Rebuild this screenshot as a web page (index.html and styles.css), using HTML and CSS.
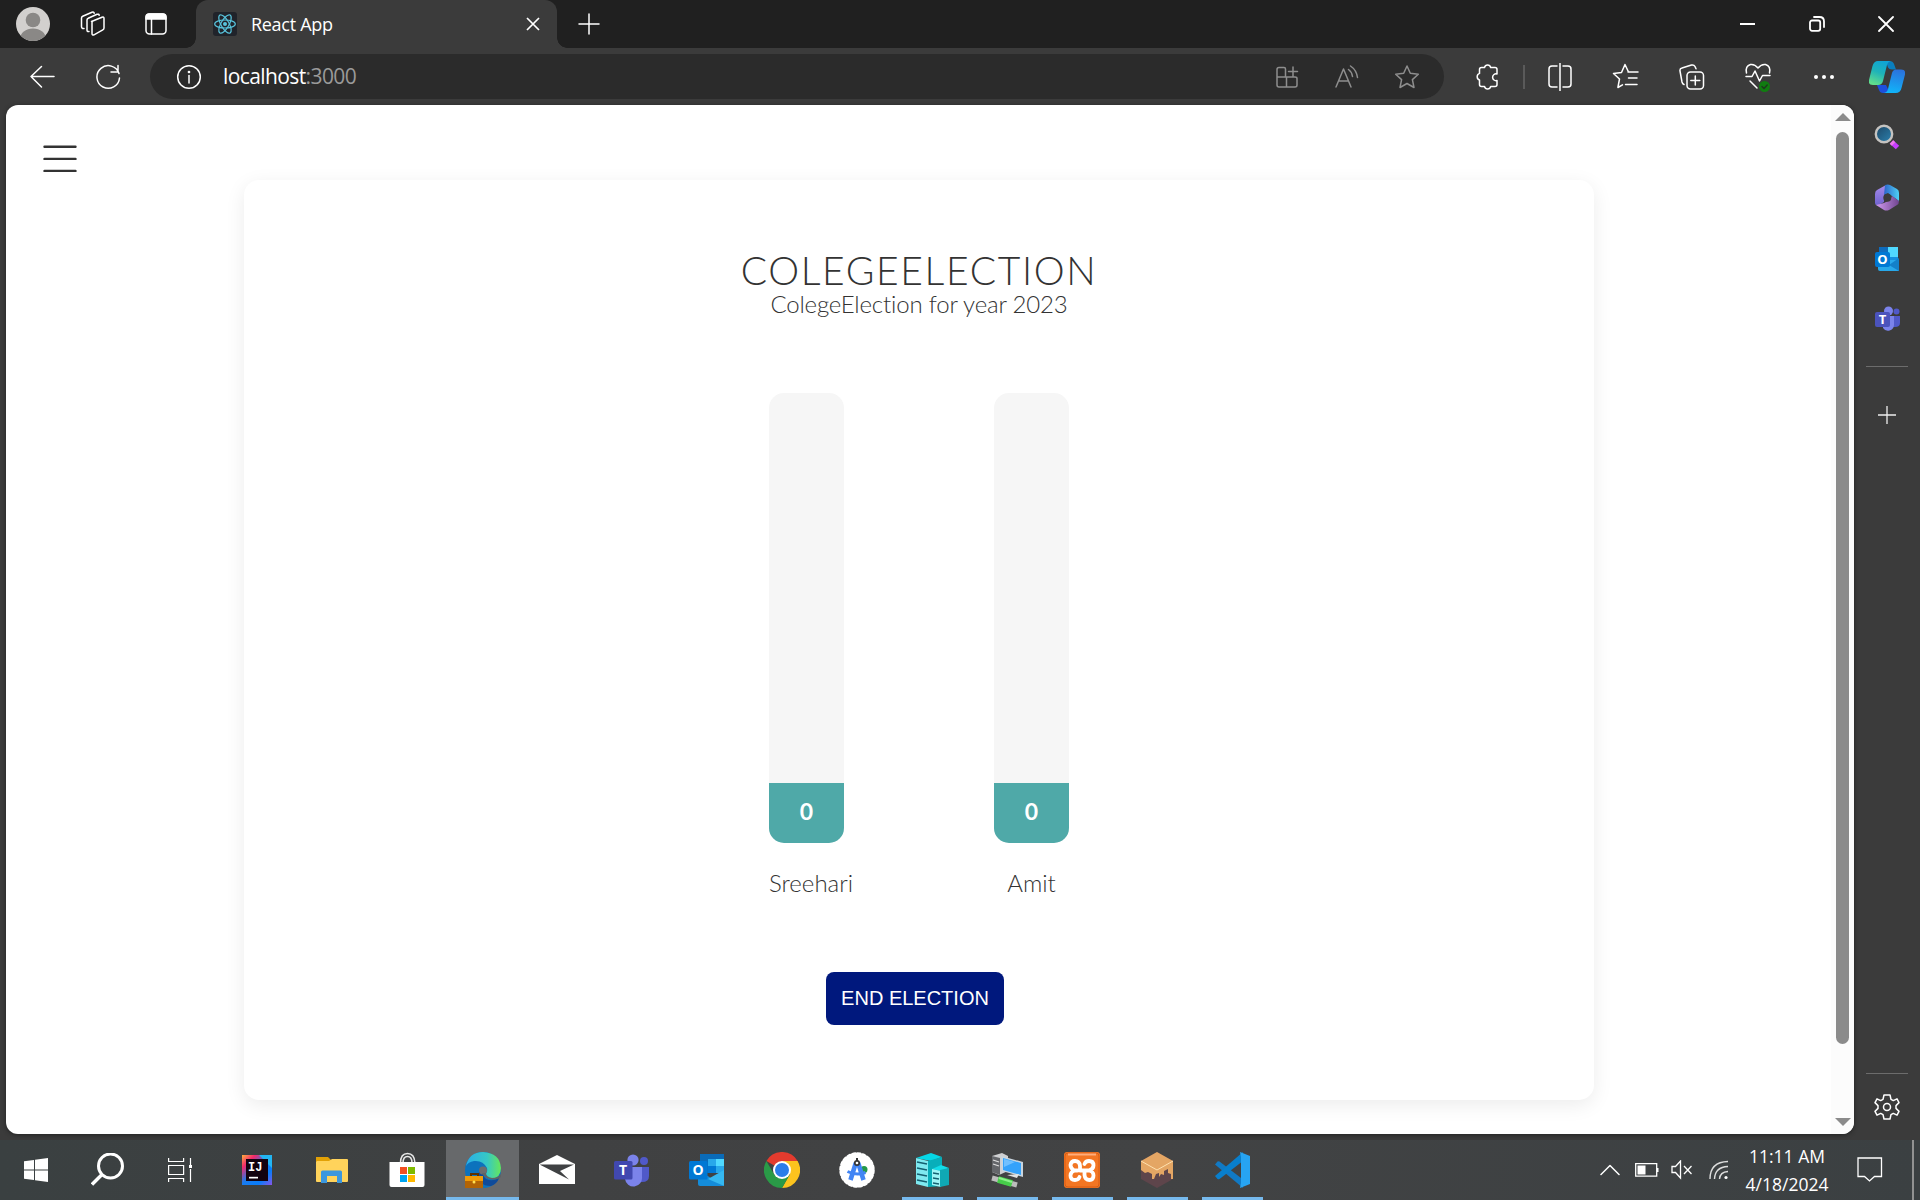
FILE: index.html
```html
<!DOCTYPE html>
<html lang="en">
<head>
<meta charset="utf-8">
<title>React App</title>
<link rel="stylesheet" href="styles.css">
</head>
<body>
<div class="screen">
  <header class="tabstrip">
    <div class="cell w66"><svg width="34" height="34" viewBox="0 0 34 34"><defs><clipPath id="av"><circle cx="17" cy="17" r="17"/></clipPath></defs><circle cx="17" cy="17" r="17" fill="#d2d0ce"/><g clip-path="url(#av)" fill="#8a8886"><circle cx="17" cy="13" r="7.3"/><ellipse cx="17" cy="32" rx="13" ry="10.5"/></g></svg></div>
    <div class="cell w54"><svg width="26" height="26" viewBox="0 0 26 26" class="line"><path d="M11.5 10.5 22 6.2q2-.7 2 1.300v9.500q0 1.300-1.200 1.900L14 23.800q-2 .8-2-1.200V11.500q0-.8.600-1.100z"/><path d="M9 20.500q-2 .5-2-1.500V9q0-1.200 1.200-1.700L17 3.300q2-.6 2.200 1"/><path d="M4 17.500q-2.500.3-2.500-2V7q0-1.200 1.200-1.700L12 1.200q1.800-.6 2.200 1"/></svg></div>
    <div class="cell w72"><svg width="24" height="24" viewBox="0 0 24 24" class="line"><rect x="2" y="2" width="20" height="20" rx="3.500"/><path d="M7.500 7v15"/><path d="M2 7V5q0-3 3-3h14q3 0 3 3v2z" fill="#fff"/></svg></div>
    <div class="tab">
      <svg class="favicon" width="24" height="24" viewBox="0 0 24 24"><rect width="24" height="24" rx="3" fill="#20232a"/><g fill="none" stroke="#58c4dc" stroke-width="1.200"><ellipse cx="12" cy="12" rx="10.300" ry="4"/><ellipse cx="12" cy="12" rx="10.300" ry="4" transform="rotate(60 12 12)"/><ellipse cx="12" cy="12" rx="10.300" ry="4" transform="rotate(120 12 12)"/></g><circle cx="12" cy="12" r="2" fill="#58c4dc"/></svg>
      <span class="tab-title">React App</span>
      <svg class="tab-close" width="14" height="14" viewBox="0 0 14 14"><path d="M1 1 13 13M13 1 1 13"/></svg>
    </div>
    <div class="cell w64"><svg width="22" height="22" viewBox="0 0 22 22" class="line"><path d="M11 1v20M1 11h20"/></svg></div>
    <div class="window-buttons">
      <div class="cell w69"><svg width="16" height="16" viewBox="0 0 16 16"><path d="M0 7h15v2H0z" fill="#fff"/></svg></div>
      <div class="cell w69"><svg width="16" height="16" viewBox="0 0 16 16" class="line bold"><rect x="1" y="4.500" width="10.200" height="10.300" rx="2"/><path d="M5 1h5.500q4.500 0 4.500 4.500V11"/></svg></div>
      <div class="cell w69"><svg width="16" height="16" viewBox="0 0 16 16" class="line bold"><path d="M1 1 15 15M15 1 1 15"/></svg></div>
    </div>
  </header>

  <nav class="toolbar">
    <div class="cell w66"><svg width="26" height="24" viewBox="0 0 26 24" class="line"><path d="M25 11.500H2M12.500 1.500 2 11.500l10.500 10.500"/></svg></div>
    <div class="cell w66"><svg width="26" height="26" viewBox="0 0 26 26" class="line"><path d="M24 9.500A11.300 11.300 0 1 0 24.500 14M23 1.500V8h-7"/></svg></div>
    <div class="address">
      <div class="cell w66"><svg width="26" height="26" viewBox="0 0 26 26" class="line"><circle cx="13" cy="13" r="11.300"/><path d="M13 11.500v7.500"/><circle cx="13" cy="8" r=".6" fill="#fff"/></svg></div>
      <span class="url">localhost<span class="port">:3000</span></span>
      <div class="address-icons">
        <div class="cell w60"><svg width="24" height="24" viewBox="0 0 24 24" class="line dim"><path d="M10.500 12V4q0-1.500-1.500-1.500H4Q2 2.500 2 4.500V20q0 2 2 2h16q2 0 2-2v-6.500q0-1.500-2-1.500H2M11.500 12v10M18 2v9M13.500 6.500h9"/></svg></div>
        <div class="cell w60"><svg width="26" height="24" viewBox="0 0 26 24" class="line dim"><path d="M2 22 9.500 4 17 22M4.500 16h10M14.500 4.500q3.500 2.500 4 7M16.500 1q6 4 7 11.500"/></svg></div>
        <div class="cell w60"><svg width="26" height="26" viewBox="0 0 26 26" class="line dim"><path d="m13 2 3.300 7.300 8 .9-5.900 5.400 1.600 7.900-7-4-7 4 1.600-7.900-5.900-5.400 8-.9z"/></svg></div>
      </div>
    </div>
    <div class="cell w66 ext"><svg width="26" height="28" viewBox="0 0 26 28" class="line"><path d="M9.500 4.500a3.200 3.200 0 0 1 6.200 0H20q2 0 2 2V11a3.400 3.400 0 1 0 0 6.500v4q0 2-2 2h-4.300a3.200 3.200 0 0 1-6.200 0H6.500q-2 0-2-2V17a3.500 3.500 0 0 1 0-6.600V6.500q0-2 2-2z"/></svg></div>
    <div class="tool-divider"></div>
    <div class="cell w66"><svg width="26" height="28" viewBox="0 0 26 28" class="line"><path d="M10 3H5Q2 3 2 6v15q0 3 3 3h5M16 3h5q3 0 3 3v15q0 3-3 3h-5M13 0v28"/></svg></div>
    <div class="cell w66"><svg width="28" height="28" viewBox="0 0 28 28" class="line"><path d="M16.500 9 13 1.500 9.500 9.500l-8 1 6 5.500-1.600 8.500 4.600-2.700M16 9h10M16.500 15h8.500M13.500 21.500H25"/></svg></div>
    <div class="cell w66"><svg width="26" height="28" viewBox="0 0 26 28" class="line"><rect x="8" y="9" width="16.500" height="17" rx="3.500"/><path d="M16.300 13v9M11.800 17.500h9M5 21.500Q3.500 21 3 19L1 8q-.4-2.500 2-3L12.500 2q2.500-.5 3.500 1.500l1 2.300"/></svg></div>
    <div class="cell w66"><svg width="28" height="30" viewBox="0 0 28 30" class="line"><path d="M2.500 11Q1 4 6.500 2.500q4-.7 7.500 3.500 3.500-4.200 7.500-3.500Q27 4 25.500 11M2 14.500h6L11 9l4.500 10 3-5.500H26M6 19l7 7"/><circle cx="20.500" cy="24.500" r="5.500" fill="#107c10" stroke="none"/><path d="m18 24.500 2 2 3.200-3.500" stroke="#1d3b1d"/></svg></div>
    <div class="cell w66"><svg width="22" height="6" viewBox="0 0 22 6" fill="#fff"><circle cx="3" cy="3" r="2"/><circle cx="11" cy="3" r="2"/><circle cx="19" cy="3" r="2"/></svg></div>
    <div class="cell copilot"><svg width="36" height="32" viewBox="0 0 36 32"><defs><linearGradient id="c1" x1=".7" y1="0" x2=".3" y2="1"><stop offset="0" stop-color="#0ea3d6"/><stop offset=".5" stop-color="#1fb3b8"/><stop offset="1" stop-color="#62de8c"/></linearGradient><linearGradient id="c2" x1=".6" y1="0" x2=".4" y2="1"><stop offset="0" stop-color="#2b72dc"/><stop offset="1" stop-color="#10b5fa"/></linearGradient></defs><path d="M8 24h9l4 8h-7q-3 0-4-3z" fill="#1d4fdc"/><path d="M13 0h7q4 0 5 3l2 5.500h-4q-3 0-4-2-1-5-6-6.500z" fill="#0a7fbe"/><path d="M9 0h14q-4 0-5 4l-4 16q-1 4-5 4H4q-5 0-4-5L3.500 5Q5 0 9 0z" fill="url(#c1)"/><path d="M27 8.500h5q5 0 4 5L32.500 27q-1 5-6 5H14q4 0 5-4l4-16q1-3.500 4-3.500z" fill="url(#c2)"/></svg></div>
  </nav>

  <div class="content">
    <main class="page">
      <div class="viewport">
        <svg class="hamburger" width="36" height="30" viewBox="0 0 36 30"><path d="M2.500 2.700h31M2.500 14.900h31M2.500 26.900h31" stroke="#333" stroke-width="2.400" stroke-linecap="round"/></svg>
        <section class="card">
          <h1 class="title">COLEGEELECTION</h1>
          <p class="subtitle">ColegeElection for year 2023</p>
          <div class="bars">
            <div class="candidate"><div class="track"><div class="fill">0</div></div><span class="name n-sreehari">Sreehari</span></div>
            <div class="candidate"><div class="track"><div class="fill">0</div></div><span class="name">Amit</span></div>
          </div>
          <button class="end">END ELECTION</button>
        </section>
      </div>
      <div class="scrollbar">
        <svg width="16" height="8" viewBox="0 0 16 8"><path d="M0 8 8 0l8 8z" fill="#8b8b8b"/></svg>
        <div class="thumb"></div>
        <svg class="down" width="16" height="8" viewBox="0 0 16 8"><path d="M0 0h16L8 8z" fill="#8b8b8b"/></svg>
      </div>
    </main>
    <aside class="sidebar">
      <svg class="s-search" width="26" height="26" viewBox="0 0 26 26"><defs><linearGradient id="sg" x1="0" y1="0" x2="1" y2="1"><stop offset="0" stop-color="#1d4665"/><stop offset="1" stop-color="#2b82b0"/></linearGradient></defs><path d="m17.500 18 6 5.500" stroke="#c63cff" stroke-width="5"/><path d="m17.500 18 2 2" stroke="#ee79ea" stroke-width="5"/><circle cx="10" cy="10" r="8.200" fill="url(#sg)" stroke="#c5c3c0" stroke-width="2.400"/></svg>
      <svg class="s-app" width="26" height="28" viewBox="0 0 26 28"><defs><linearGradient id="m1" x1="0" y1="0" x2="0" y2="1"><stop offset="0" stop-color="#a78bea"/><stop offset="1" stop-color="#6f63cf"/></linearGradient><linearGradient id="m2"><stop offset="0" stop-color="#2c64c9"/><stop offset="1" stop-color="#4ed0f5"/></linearGradient><linearGradient id="m3"><stop offset="0" stop-color="#d09af0"/><stop offset="1" stop-color="#70458f"/></linearGradient></defs><path d="M12 1 3 6Q1 7 1 10v9q0 3 4 2l5-3v-7l2-2z" fill="url(#m1)"/><path d="M11 1q3-1 5 0l7 4q2 1 2 4v8l-7-5-4-3-4 2z" fill="url(#m2)"/><path d="m2 21 8-2 6-3 2-4 7 5q0 3-2 4l-8 5q-3 1-5 0z" fill="url(#m3)"/><circle cx="13.300" cy="13.800" r="4" fill="#3b3b3b"/></svg>
      <svg class="s-app" width="26" height="26" viewBox="0 0 26 26"><path d="M5 1h19v20H5z" fill="#1490df"/><path d="M14 1h10v10H14z" fill="#50d9ff"/><path d="M5 1h9v6H5z" fill="#0f6cbd"/><path d="M4 14h20l1 11H6q-2 0-2-2z" fill="#28a8ea"/><path d="m25 12-10 7 10 6z" fill="#1380c8"/><rect x="1" y="6" width="15" height="15" rx="2" fill="#0078d4"/><text x="8.500" y="18" class="badge-letter">O</text></svg>
      <svg class="s-app" width="26" height="26" viewBox="0 0 26 26"><circle cx="14.500" cy="5" r="4.500" fill="#7b83eb"/><circle cx="22.500" cy="5.500" r="3" fill="#5059c9"/><path d="M18 10h8v7q0 4-5 4h-3z" fill="#5059c9"/><path d="M9 10h11v9a6 6 0 0 1-11 3z" fill="#7b83eb"/><rect x="1" y="6" width="15" height="15" rx="2" fill="#4b53bc"/><text x="8.500" y="18" class="badge-letter">T</text></svg>
      <div class="side-divider"></div>
      <svg class="s-plus" width="18" height="18" viewBox="0 0 18 18"><path d="M9 0v18M0 9h18" stroke="#eee" stroke-width="1.300"/></svg>
      <div class="side-divider bottom"></div>
      <svg class="s-gear" width="26" height="28" viewBox="0 0 26 28"><g fill="none" stroke="#fff" stroke-width="1.500" stroke-linejoin="round"><path d="M10 2h6l1 4.300 2.300 1.300 3.700-1.800 2 3.800-3 3v2.800l3 3-2 3.800-3.700-1.800L17 21.700 16 26h-6l-1-4.300-2.300-1.300L3 22.200l-2-3.800 3-3v-2.800l-3-3 2-3.800 3.700 1.800L9 6.300z"/><circle cx="13" cy="14" r="3.500"/></g></svg>
    </aside>
  </div>

  <footer class="taskbar">
    <div class="cell w72"><svg width="24" height="24" viewBox="0 0 24 24" fill="#fff"><path d="M0 3.300 10 2v9.500H0zM11 1.800 24 0v11.500H11zM0 12.500h10V22L0 20.700zM11 12.500h13V24l-13-1.800z"/></svg></div>
    <div class="cell w72"><svg width="34" height="34" viewBox="0 0 34 34" fill="none" stroke="#fff"><circle cx="19.500" cy="13" r="12" stroke-width="3"/><path d="M11 21.500 1 31.500" stroke-width="3.400"/></svg></div>
    <div class="cell w72"><svg width="24" height="24" viewBox="0 0 24 24" fill="none" stroke="#fff" stroke-width="1.200"><path d="M.6 0v3.500h15V0M.6 7.500h15v9H.6zM.6 24v-3.500h15V24M22.500 0v7M22.500 11v13"/><path d="M21 7h3v3h-3z" fill="#fff" stroke="none"/></svg></div>
    <div class="cell tile first"><svg width="30" height="30" viewBox="0 0 30 30"><defs><linearGradient id="ij" x1="0" y1="0" x2="1" y2="1"><stop offset="0" stop-color="#fdb13c"/><stop offset=".22" stop-color="#f4286c"/><stop offset=".48" stop-color="#197cf0"/><stop offset=".75" stop-color="#087cfa"/><stop offset="1" stop-color="#8a55e8"/></linearGradient></defs><path d="M0 0h30v30H0z" fill="url(#ij)"/><path d="M17 0h13v13z" fill="#22b5f2"/><path d="M4 4h22v22H4z" fill="#12020f"/><path d="M7 21.800h9v1.700H7z" fill="#fff"/><text x="6" y="15.500" class="ij">IJ</text></svg></div>
    <div class="cell tile"><svg width="32" height="28" viewBox="0 0 32 28"><path d="M0 1h12l3 3v4H0z" fill="#e2a106"/><path d="M1 5h12l3-2h15q1 0 1 1v21q0 1-1 1H1q-1 0-1-1V6z" fill="#ffd35b"/><path d="M5 27V16q0-1.500 1.500-1.500h18Q26 14.500 26 16v11h-5v-7H11v7z" fill="#3b97de"/></svg></div>
    <div class="cell tile"><svg width="36" height="36" viewBox="0 0 36 36"><g fill="none" stroke="#e8e8e8" stroke-width="1.500"><path d="M11.500 11q0-9.500 7-9.500t7.500 9.500M14 11q0-6.500 4.500-6.500T23 11"/></g><path d="M.5 10h35v23q0 2-2 2h-31q-2 0-2-2z" fill="#fff"/><path d="M11 15h7v7h-7z" fill="#f25022"/><path d="M19 15h7v7h-7z" fill="#7fba00"/><path d="M11 23h7v7h-7z" fill="#00a4ef"/><path d="M19 23h7v7h-7z" fill="#ffb900"/></svg></div>
    <div class="cell tile active"><svg width="36" height="36" viewBox="0 0 36 36"><defs><linearGradient id="e1"><stop offset="0" stop-color="#2aaee8"/><stop offset=".6" stop-color="#36c8c5"/><stop offset="1" stop-color="#66e65a"/></linearGradient></defs><circle cx="18" cy="18" r="18" fill="#0c72bd"/><path d="M1 14Q4 0 18 0q17 1 18 16 0 10-10 11-6-1-6-5 3-2 2-6-4-8-13-7-6 1-8 5z" fill="url(#e1)"/><path d="M14 20q-2 14 12 14 6-2 8-8-7 4-13 1-4-3-3-9z" fill="#0f4b9a"/><circle cx="18" cy="18.500" r="4" fill="#6b6c6e"/><path d="M17 21q3 6 11 6.500 4 .5 8-2.500v-3q-3 4-9 4-6-1-6-5z" fill="#606264"/><path d="M6 24v-2h7v2" fill="none" stroke="#5b3000" stroke-width="2"/><path d="M0 24h18v12H0z" fill="#b26406"/><path d="M0 24h18v5H0z" fill="#ef9b08"/><circle cx="9" cy="30" r="1.500" fill="#ffe052"/></svg></div>
    <div class="cell tile"><svg width="36" height="30" viewBox="0 0 36 30"><path d="M0 9 18 0l18 9v20H0z" fill="#fff"/><path d="M1 9.500h34L21 16l9 8.500L1.500 10z" fill="#3f4143"/></svg></div>
    <div class="cell tile"><svg width="36" height="34" viewBox="0 0 36 34"><circle cx="19" cy="7" r="5.600" fill="#7b83eb"/><circle cx="30" cy="8" r="4" fill="#5059c9"/><path d="M25 14h10v9q0 6-7 6h-5z" fill="#5059c9"/><path d="M12 14h16v10a8.500 8.500 0 0 1-17 2z" fill="#7b83eb"/><rect x="0" y="8" width="18.500" height="18.500" rx="1.500" fill="#4148b0"/><text x="9" y="22" class="task-letter">T</text></svg></div>
    <div class="cell tile"><svg width="36" height="34" viewBox="0 0 36 34"><path d="M11 1h24v19H11z" fill="#0a6bb8"/><path d="M19 6h8v7h-8z" fill="#28a8ea"/><path d="M27 6h8v7h-8z" fill="#50d9ff"/><path d="M19 13h8v7h-8z" fill="#0078d4"/><path d="M27 13h8v7h-8z" fill="#28a8ea"/><path d="M9 17 35 33H11q-2 0-2-2z" fill="#148cda"/><path d="m35 17-16 9 16 7z" fill="#35b8f1"/><rect x="0" y="8" width="18.500" height="18.500" rx="1.500" fill="#0078d4"/><text x="9" y="22" class="task-letter">O</text></svg></div>
    <div class="cell tile"><svg width="36" height="36" viewBox="0 0 36 36"><path d="M18 18 2.400 9A18 18 0 0 1 33.600 9z" fill="#e33b2e"/><path d="M18 9h15.600A18 18 0 0 1 18 36l8-14z" fill="#fcc31e"/><path d="M2.400 9 10.200 22.500 18 27l7.800-4.500L18 36A18 18 0 0 1 2.400 9z" fill="#2a9a47"/><circle cx="18" cy="18" r="9" fill="#fff"/><circle cx="18" cy="18" r="7" fill="#2b7de9"/></svg></div>
    <div class="cell tile"><svg width="36" height="36" viewBox="0 0 36 36"><circle cx="18" cy="18" r="16.500" fill="#fff"/><circle cx="18" cy="18" r="16.500" fill="none" stroke="#fff" stroke-width="2.500" stroke-linecap="round" stroke-dasharray="3 2.180"/><circle cx="25" cy="17.500" r="3.500" fill="#249848"/><path d="M16.800 11 11.500 28M19.200 11l5.300 17" stroke="#4285f4" stroke-width="4.600"/><path d="M8.500 19.500q9 4.500 18 1" stroke="#4285f4" stroke-width="3" fill="none"/><circle cx="18" cy="11" r="2.200" fill="#fff" stroke="#333" stroke-width="1.700"/><path d="M18 6v3" stroke="#333" stroke-width="2"/></svg></div>
    <div class="cell tile open"><svg width="34" height="36" viewBox="0 0 34 36"><path d="m1 6 15-5 11 4-11 4z" fill="#06d6e6"/><path d="m1 6 12 3v26L1 32z" fill="#7ee9f0"/><path d="m13 9 14-4v29l-14 1z" fill="#08aeba"/><path d="m2 10 10 2m-10 4 10 2M2 22l10 2M2 28l10 2" stroke="#155f70" stroke-width="1.500"/><path d="m17 17 9-4 8 3-7 3z" fill="#12dce8"/><path d="m17 17 9 2v16l-9-2z" fill="#9df4f6"/><path d="m25 18 9-2v17l-9 2z" fill="#0fa8b4"/><path d="m18 21 6 1m-6 4 6 1m-6 4 6 1" stroke="#155f70" stroke-width="1.300"/></svg></div>
    <div class="cell tile open"><svg width="34" height="36" viewBox="0 0 34 36"><path d="m2 4 10-3 6 3v15l-9 4-7-3z" fill="#cecfd1"/><path d="m2 4 8 2v17l-8-3z" fill="#64666a"/><path d="m3 8 6 2m-6 2 6 2" stroke="#ddd" stroke-width="1.300"/><path d="m11 4 22 6v15l-21-6z" fill="#c9d5de"/><path d="m13 6 18 5v12l-18-5z" fill="#34a2fb"/><path d="m14 7 11 3-11 5z" fill="#70c0ff"/><path d="m17 23 12-1-2 4z" fill="#e3e3e3"/><path d="m2 26 25 7" stroke="#bcbcbc" stroke-width="5"/><path d="m8 27.500 14 4" stroke="#46cc49" stroke-width="7"/><path d="m9 26 13 4" stroke="#8cf18b" stroke-width="2"/></svg></div>
    <div class="cell tile open"><svg width="36" height="36" viewBox="0 0 36 36"><rect width="36" height="36" rx="3" fill="#f37623"/><rect x="1" y="1" width="34" height="34" rx="3" fill="none" stroke="#d95d14" stroke-width="1"/><path d="M4 1.500h28v2H4z" fill="#ffad7b"/><path d="M13.500 18.500H10Q6.500 16 6.500 13q.5-4 4.500-4 4.500 0 5 5v4.500h9M20.500 12q1-3 4.500-3 4.500 0 4.500 4.500 0 3.500-4.500 5 4.500 1 4.500 5 0 4.500-4 4.500-4.500 0-5-5v-4.500M15.500 25q-1 3-4.500 3-4.500 0-4.500-4.500 0-3.500 4-5" fill="none" stroke="#fff" stroke-width="3.800" stroke-linecap="round" stroke-linejoin="round"/></svg></div>
    <div class="cell tile open"><svg width="34" height="36" viewBox="0 0 34 36"><path d="m17 0 16 9v18l-16 9-16-9V9z" fill="#5e454b"/><path d="m17 0 16 9v18h-2v-5l-3-1v-4l-4 2v4l-3-1-2 3v-4l-3 1-2 5h-2v-5l-4-2-3 1-4-3V9z" fill="#e4a664"/><path d="m1 9 16 9 16-9" fill="none" stroke="#ffe1af" stroke-width="1"/></svg></div>
    <div class="cell tile open"><svg width="36" height="36" viewBox="0 0 36 36"><path d="M1 12.500 3.500 9.500q1-.7 2 0L29 27.500V36z" fill="#1179c4"/><path d="m1 24 2.500 3q1 .7 2 0L29 9V0z" fill="#087fcd"/><path d="m26 0 10 4v28l-10 4 1-5V5z" fill="#27a4f2"/></svg></div>
    <div class="tray">
      <svg width="20" height="12" viewBox="0 0 20 12" class="line"><path d="m1 10.500 9-9 9 9"/></svg>
      <svg class="battery" width="24" height="14" viewBox="0 0 24 14"><path d="M.7.700h21v12.500H.7z" fill="none" stroke="#fff" stroke-width="1.300"/><path d="M2.500 2.500h8v9h-8zM22 5h1.500v4H22z" fill="#fff"/></svg>
      <svg class="speaker" width="22" height="20" viewBox="0 0 22 20" class="line"><path d="M1 6.500h3.500l5-5.500v17l-5-5.500H1zM13 6l7.500 8M20.500 6 13 14" fill="none" stroke="#fff" stroke-width="1.300"/></svg>
      <svg class="wifi" width="20" height="20" viewBox="0 0 20 20" fill="none" stroke="#ddd" stroke-width="1.400"><path d="M1 19Q1 2 19 1.500M5.500 19Q6 7 19 6.500M10.500 19q.5-7 8.500-7.500"/><circle cx="17" cy="17.500" r="1.600" fill="#fff" stroke="none"/></svg>
      <div class="clock"><span>11:11 AM</span><span class="date">4/18/2024</span></div>
      <svg class="notice" width="26" height="26" viewBox="0 0 26 26" fill="none" stroke="#fff" stroke-width="1.300"><path d="M1 1h23.500v18.500h-7L12.500 24l-5-4.500H1z"/></svg>
      <div class="desktop-edge"></div>
    </div>
  </footer>
</div>
</body>
</html>
```

FILE: styles.css
```css
* { box-sizing: border-box; }
body { margin: 0; background: #3b3b3b; font-family: "Open Sans", "Noto Sans", sans-serif; color: #fff; overflow: hidden; }
svg { display: block; flex: none; }
.screen { width: 1920px; height: 1200px; display: flex; flex-direction: column; }
.cell { display: flex; align-items: center; justify-content: center; flex: none; height: 100%; }
.w54 { width: 54px; } .w60 { width: 60px; } .w64 { width: 64px; } .w66 { width: 66px; } .w69 { width: 69px; } .w72 { width: 72px; }
.line { fill: none; stroke: #fff; stroke-width: 1.5; stroke-linecap: round; stroke-linejoin: round; }
.line.bold { stroke-width: 1.8; }
.line.dim { stroke: #8e8e8e; }

.tabstrip { height: 48px; background: #202020; display: flex; align-items: center; flex: none; }
.tab { position: relative; width: 361px; height: 48px; margin-left: 4px; background: #3b3b3b; border-radius: 12px 12px 0 0; display: flex; align-items: center; padding: 0 17px; }
.tab::before, .tab::after { content: ""; position: absolute; bottom: 0; width: 10px; height: 10px; }
.tab::before { left: -10px; background: radial-gradient(circle at 0 0, transparent 9.5px, #3b3b3b 10px); }
.tab::after { right: -10px; background: radial-gradient(circle at 100% 0, transparent 9.5px, #3b3b3b 10px); }
.tab-title { margin-left: 14px; font-size: 18px; letter-spacing: -0.3px; line-height: 24px; padding-bottom: 1px; }
.tab-close { margin-left: auto; stroke: #fff; stroke-width: 1.7; }
.window-buttons { display: flex; height: 100%; margin-left: auto; }

.toolbar { height: 57px; padding-left: 9px; display: flex; align-items: center; flex: none; }
.address { width: 1294px; height: 45px; margin-left: 9px; padding: 0 7px 0 6px; background: #2b2b2b; border-radius: 23px; display: flex; align-items: center; flex: none; }
.url { margin-left: 1px; font-size: 21px; letter-spacing: -0.6px; line-height: 28px; padding-bottom: 1px; }
.port { color: #9a9a9a; }
.address-icons { display: flex; margin-left: auto; height: 100%; }
.ext { margin-left: 11px; }
.tool-divider { width: 2px; height: 24px; margin: 0 2px; background: #5a5a5a; flex: none; }
.copilot { width: 60px; }

.content { height: 1035px; display: flex; flex: none; padding-left: 6px; }
.page { width: 1848px; height: 1029px; display: flex; background: #fff; border-radius: 12px; overflow: hidden; box-shadow: 0 1px 4px #222; }
.viewport { width: 1825px; padding: 39px 0 0 36px; }
.hamburger { margin-bottom: 6px; }
.card { width: 1350px; height: 920px; margin-left: 202px; border-radius: 15px; box-shadow: 0 5px 20px rgba(0, 0, 0, 0.08); display: flex; flex-direction: column; align-items: center; padding-top: 70px; color: #333; font-family: Lato, "Open Sans", sans-serif; font-weight: 300; }
.title { margin: 0; font-size: 39px; font-weight: 300; line-height: 40px; letter-spacing: 1.65px; }
.subtitle { margin: 0; font-size: 24px; line-height: 27px; letter-spacing: -0.17px; }
.bars { display: flex; gap: 150px; margin-top: 76px; }
.candidate { width: 75px; display: flex; flex-direction: column; align-items: center; }
.track { width: 75px; height: 450px; background: #f6f6f6; border-radius: 15px; overflow: hidden; display: flex; align-items: flex-end; }
.fill { width: 100%; height: 60px; background: #4fa9a8; color: #fff; font-size: 23px; font-weight: 700; line-height: 56px; text-align: center; }
.name { margin-top: 24px; font-size: 24px; line-height: 32px; letter-spacing: 0; }
.n-sreehari { align-self: flex-start; }
.end { width: 178px; height: 53px; margin: 73px 8px 0 0; padding: 0; border: 0; border-radius: 8px; background: #00187d; color: #fff; font: 20px "Liberation Sans", Arial, sans-serif; white-space: nowrap; }
.scrollbar { width: 23px; padding: 8px 4px; background: #fcfcfc; display: flex; flex-direction: column; align-items: center; }
.thumb { width: 13px; height: 912px; margin-top: 11px; border-radius: 7px; background: #8b8b8b; }
.down { margin-top: auto; }

.sidebar { width: 66px; display: flex; flex-direction: column; align-items: center; }
.s-search { margin-top: 19px; margin-bottom: 7px; }
.s-app { margin: 27px 0 7px; }
.s-app + .s-app { margin-top: 27px; }
.side-divider { width: 42px; height: 1px; margin-top: 27px; background: #6c6c6c; }
.s-plus { margin-top: 39px; margin-right: 1px; }
.side-divider.bottom { margin-top: auto; }
.s-gear { margin: 19px 0 19px; }
.badge-letter { font: 700 13px "Open Sans", sans-serif; fill: #fff; text-anchor: middle; }

.taskbar { height: 60px; background: linear-gradient(90deg, #3a4041, #404142 30%, #424344 60%, #3b4042); display: flex; flex: none; }
.tile { width: 73px; margin-right: 2px; border-bottom: 3px solid transparent; padding: 3px 2px 0 0; }
.tile.first { margin-left: 5px; }
.tile.active { background: #67696b; border-bottom-color: #76b9ed; padding-right: 0; }
.tile.open { background: linear-gradient(#76b9ed, #76b9ed) center bottom / 61px 3px no-repeat; border: 0; padding: 0 2px 0 0; }
.task-letter { font: 700 14px "Open Sans", sans-serif; fill: #fff; text-anchor: middle; }
.ij { font: 700 12px "Liberation Mono", monospace; fill: #fff; }
.tray { margin-left: auto; display: flex; align-items: center; height: 60px; }
.battery { margin-left: 15px; }
.speaker { margin-left: 12px; }
.wifi { margin-left: 16px; }
.clock { width: 90px; margin-left: 13px; display: flex; flex-direction: column; align-items: center; font-size: 17.5px; line-height: 28px; white-space: nowrap; }
.notice { margin-left: 25px; }
.desktop-edge { width: 2px; height: 60px; margin: 0 6px 0 29px; background: #929292; }
```
